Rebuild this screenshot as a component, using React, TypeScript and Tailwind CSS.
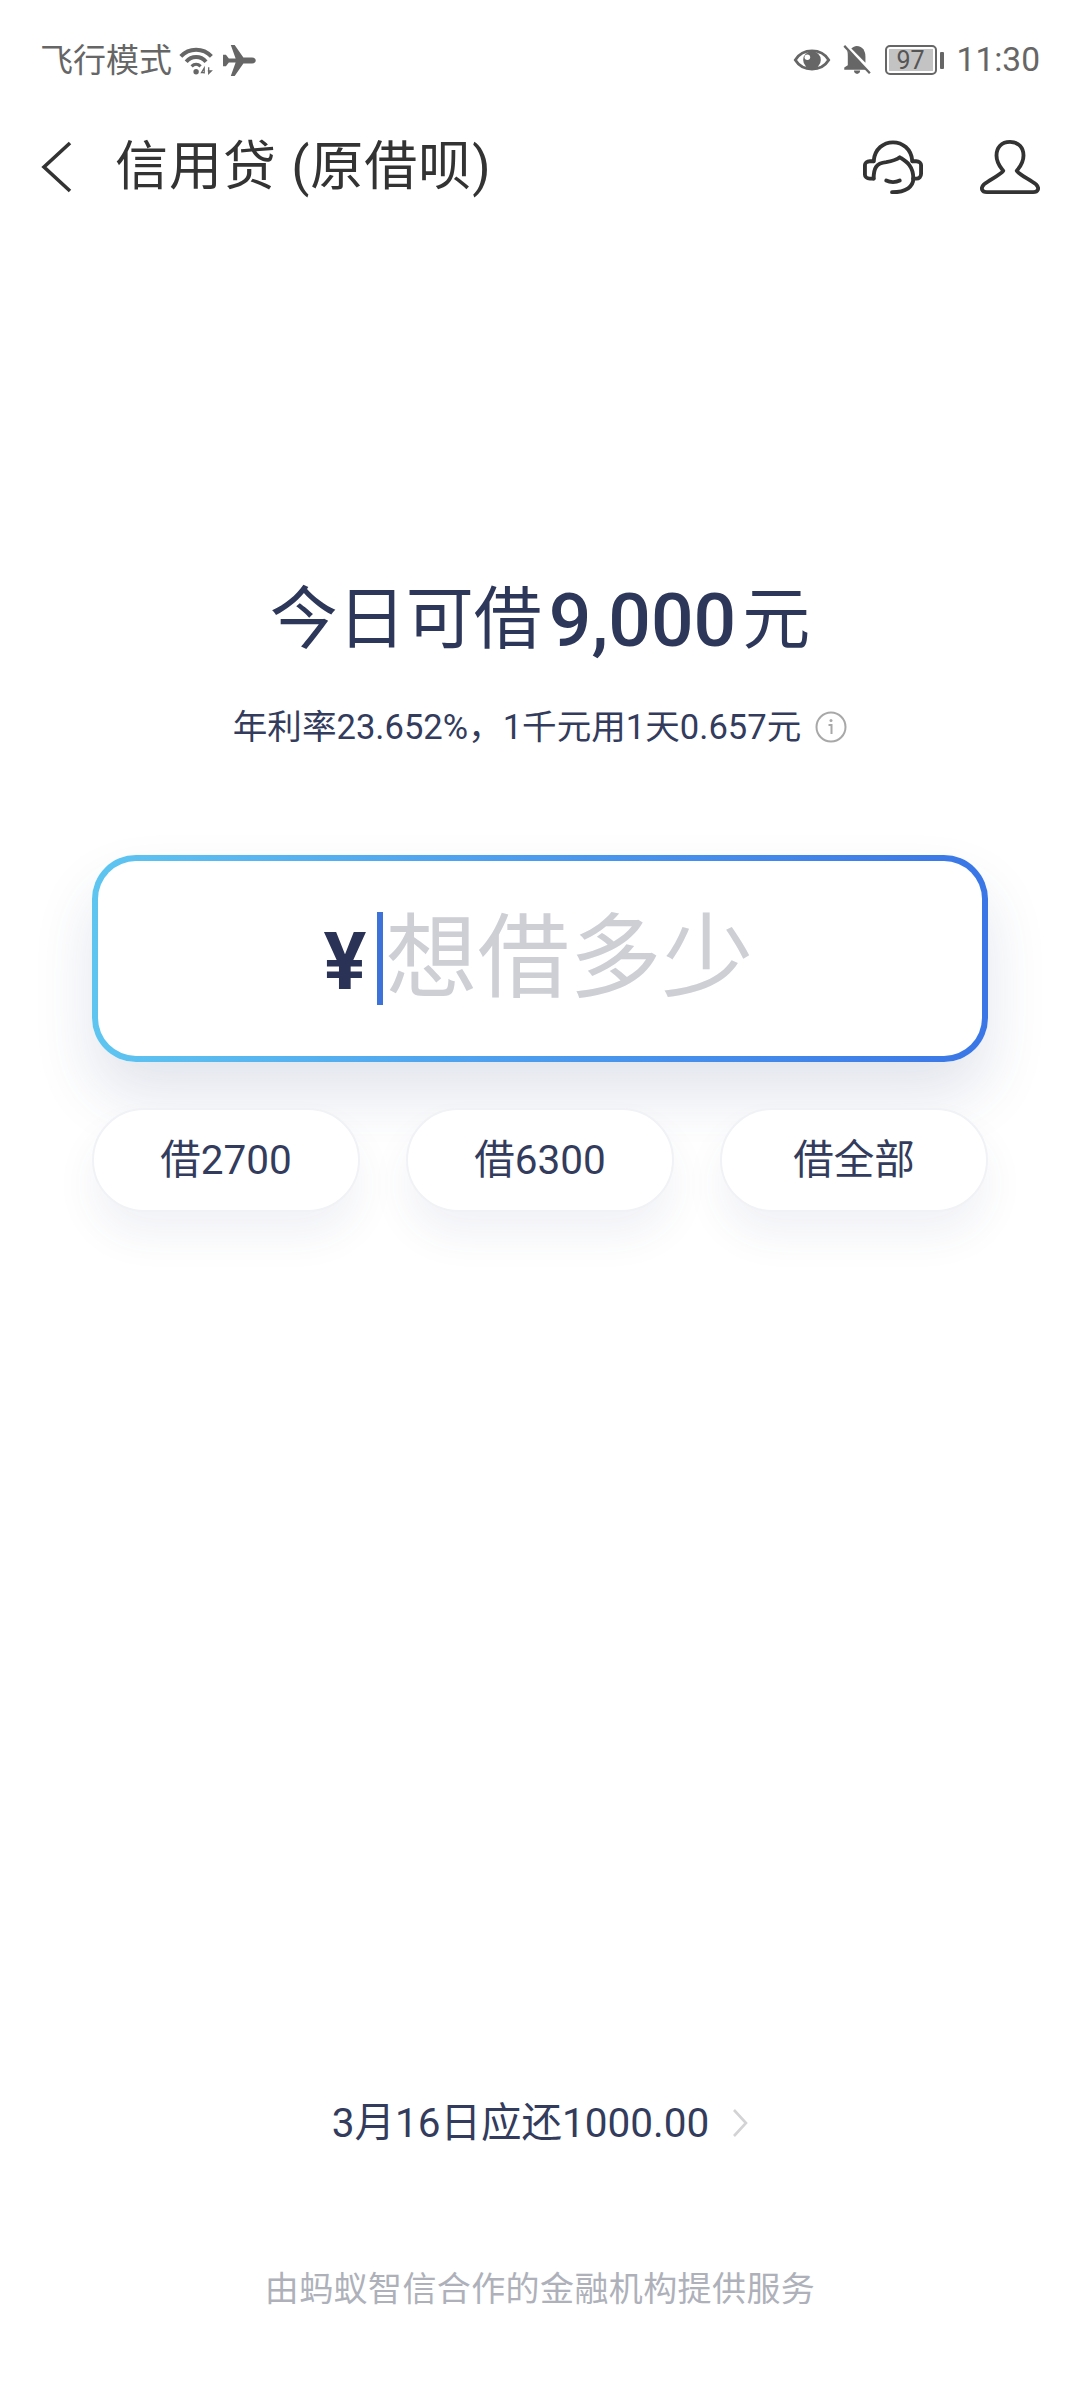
// Credit loan landing screen
const cjk = "font-['Roboto','Noto_Sans_CJK_SC',sans-serif]";

const StatusBar = () => (
  <div className="flex h-[120px] items-center justify-between pl-[40px] pr-[40px] text-[#666666]">
    <div className="flex items-center">
      <span className="text-[33px] leading-none">飞行模式</span>
      {/* wifi */}
      <svg width="36" height="30" viewBox="0 0 40 32" className="ml-[7px]" fill="none">
        <path d="M2 12 C11 2 27 2 36 12" stroke="#666" strokeWidth="4.4" />
        <path d="M8 18 C14 11 24 11 30 18" stroke="#666" strokeWidth="4.4" />
        <path d="M14 23 C17 20 21 20 24 23" stroke="#666" strokeWidth="3.5" />
        <circle cx="19" cy="29" r="3" fill="#666" />
        <path d="M28 31 V25 L25 30 H28 M33 24 V31 L36 28 H32" stroke="#666" strokeWidth="1.4" />
      </svg>
      {/* airplane */}
      <svg width="33" height="31" viewBox="0 0 34 32" className="ml-[8px]" fill="#666">
        <path d="M0 10 L3 10 L6 14 L13 14 L8 0 L12 0 L21 13 L30 13 C35 13 35 19 30 19 L21 19 L12 32 L8 32 L13 18 L6 18 L3 22 L0 22 Z" />
      </svg>
    </div>
    <div className="flex items-center">
      {/* eye */}
      <svg width="38" height="26" viewBox="0 0 40 28" fill="none">
        <path d="M2 14 C10 1 30 1 38 14 C30 27 10 27 2 14 Z" stroke="#666" strokeWidth="3" />
        <circle cx="20" cy="14" r="9.5" fill="#666" />
        <circle cx="15" cy="11" r="3" fill="#fff" />
      </svg>
      {/* bell off */}
      <svg width="29" height="30" viewBox="0 0 32 34" className="ml-[12px]" fill="#666">
        <path d="M4 6 L26 28 H1 V25.5 L5 23 V13 C5 10 5 8 4 6 Z" />
        <path d="M9 4 C11 2 13 1 15 1 C22 1 25 7 25 13 V20 Z" />
        <path d="M12 29 H19 C19 34 12 34 12 29 Z" />
        <path d="M1 1 L30 32" stroke="#666" strokeWidth="2.6" />
      </svg>
      {/* battery */}
      <div className="relative ml-[13px] flex h-[30px] w-[52px] items-center rounded-[5px] border-[2.5px] border-[#666666] p-[2px]">
        <div className="h-full w-full bg-[#c3c3c3]" />
        <span className="absolute inset-0 flex items-center justify-center text-[25px] leading-none text-[#555555]">97</span>
      </div>
      <div className="ml-[3px] h-[17px] w-[4px] rounded-[1px] bg-[#666666]" />
      <span className="ml-[13px] text-[33.5px] leading-none text-[#666666]">11:30</span>
    </div>
  </div>
);

const NavBar = () => (
  <div className="flex h-[94px] items-center justify-between pl-[41px] pr-[40px]">
    <div className="flex items-center">
      <svg width="32" height="52" viewBox="0 0 32 52" fill="none">
        <path d="M29 2 L3 26 L29 50" stroke="#333" strokeWidth="3.6" />
      </svg>
      <span className="ml-[42px] text-[53px] leading-none tracking-[1px] text-[#333333]">信用贷 (原借呗)</span>
    </div>
    <div className="flex items-center">
      {/* headset agent */}
      <svg width="60" height="56" viewBox="0 0 62 56" fill="none" stroke="#333" strokeWidth="4" strokeLinecap="round" strokeLinejoin="round">
        <path d="M11 22 C13 -4 49 -4 51 22" />
        <path d="M11 22 H7 C4 22 2 24 2 26 V36 C2 38 4 40 7 40 H11" />
        <path d="M11 40 C11 30 13 24 24 23 C30 22 34 21 38 18 C44 22 52 26 52 40" />
        <path d="M51 22 H55 C58 22 60 24 60 26 V35 C60 38 58 40 55 40 H52" />
        <path d="M52 40 C52 48 45 54 30 54" />
        <path d="M24 42 C28 44 34 44 38 42" />
      </svg>
      {/* profile */}
      <svg width="60" height="54" viewBox="0 0 62 56" className="ml-[57px]" fill="none" stroke="#333" strokeWidth="4" strokeLinejoin="round">
        <path d="M31 2 C22 2 17 8 17 16 C17 24 21 28 24 32 C20 37 10 41 4 46 C0 50 2 54 7 54 H55 C60 54 62 50 58 46 C52 41 42 37 38 32 C41 28 45 24 45 16 C45 8 40 2 31 2 Z" />
      </svg>
    </div>
  </div>
);

const amounts = ["借2700", "借6300", "借全部"];

export default function App() {
  return (
    <div className={`${cjk} flex h-[2400px] w-[1080px] flex-col bg-white`}>
      <StatusBar />
      <NavBar />

      <div className="mt-[364px] flex h-[84px] items-center justify-center text-[#2d3759]">
        <span className="text-[68px] leading-none">今日可借</span>
        <span className="ml-[7px] mr-[6px] text-[75px] font-medium leading-none">9,000</span>
        <span className="text-[68px] leading-none">元</span>
      </div>

      <div className="mt-[43px] flex h-[44px] items-center justify-center text-[#333c5c]">
        <span className="text-[34.6px] leading-none">年利率23.652%，1千元用1天0.657元</span>
        <svg width="32" height="32" viewBox="0 0 32 32" className="ml-[14px]" fill="none">
          <circle cx="16" cy="16" r="14.5" stroke="#a8a8a8" strokeWidth="2" />
          <circle cx="16" cy="9.5" r="1.5" fill="#a8a8a8" />
          <path d="M13.5 14 H16.5 V23" stroke="#a8a8a8" strokeWidth="2" />
        </svg>
      </div>

      {/* amount input */}
      <div className="mx-[92px] mt-[106px] h-[207px] rounded-[44px] bg-[linear-gradient(90deg,#5ec5f0,#4b9bee_50%,#3a76e6)] p-[6px] shadow-[0_34px_60px_rgba(50,70,130,0.14)]">
        <div className="flex h-full items-center justify-center rounded-[38px] bg-white">
          <span className="mt-[6px] text-[80px] font-bold leading-none text-[#2a3255]">¥</span>
          <div className="ml-[11px] h-[93px] w-[6px] bg-[#3d73d8]" />
          <span className="ml-[2px] mr-[3px] text-[92px] leading-none text-[#cdcfd5]">想借多少</span>
        </div>
      </div>

      <div className="mx-[92px] mt-[46px] flex justify-between">
        {amounts.map((a) => (
          <div
            key={a}
            className="flex h-[104px] w-[268px] items-center justify-center rounded-full border-2 border-[#f1f2f5] bg-white text-[40.5px] leading-none text-[#333c5c] shadow-[0_24px_40px_rgba(50,70,130,0.07)]"
          >
            {a}
          </div>
        ))}
      </div>

      <div className="mt-auto flex h-[48px] items-center justify-center text-[#333c5c]">
        <span className="text-[40.5px] leading-none">3月16日应还1000.00</span>
        <svg width="16" height="30" viewBox="0 0 16 30" className="ml-[23px]" fill="none">
          <path d="M2 2 L14 15 L2 28" stroke="#d3d3d6" strokeWidth="2.6" />
        </svg>
      </div>

      <div className="mb-[87px] mt-[118px] flex h-[48px] items-center justify-center text-[34px] leading-none tracking-[0.4px] text-[#aeb1ba]">
        由蚂蚁智信合作的金融机构提供服务
      </div>
    </div>
  );
}
